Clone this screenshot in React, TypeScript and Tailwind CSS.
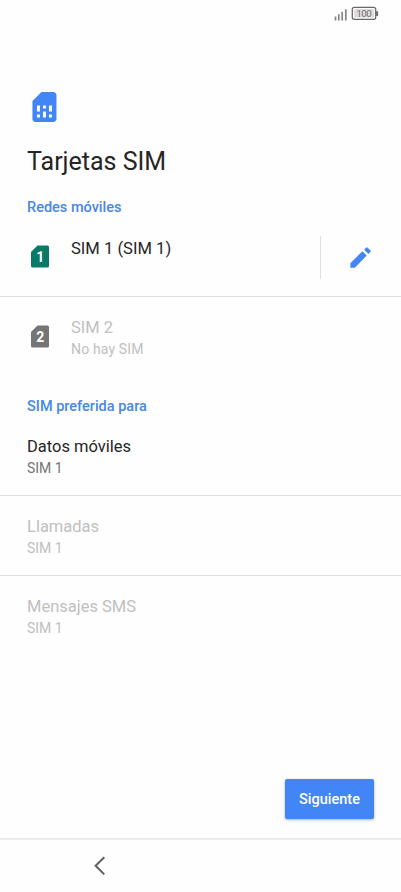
function StatusBar() {
  return (
    <header className="flex h-7 shrink-0 justify-end pr-[22px]">
      <svg width="45" height="28" viewBox="0 0 45 28">
        <path d="M1.5 20.5v-4M4.8 20.5v-6.3M8.2 20.5v-8.7M11.8 20.5V9.3" stroke="#858585" strokeWidth="1.7" />
        <rect x="18.3" y="7.3" width="23.4" height="12" rx="2" fill="#fff" stroke="#696969" strokeWidth="1.3" />
        <rect x="20" y="9" width="20" height="8.6" fill="#dedede" />
        <path d="M43.1 11.3v4.6" stroke="#696969" strokeWidth="2" />
        <text x="30.1" y="17" textAnchor="middle" fontSize="9.8" fill="#707070" textLength="15.5">100</text>
      </svg>
    </header>
  );
}

function SimCardIcon() {
  return (
    <svg className="mt-[61px] ml-[26px] size-9" viewBox="0 0 24 24" fill="#4285f4">
      <path d="M20.3 4c0-1.1-.9-2-2-2h-8L4.3 8v12c0 1.1.9 2 2 2h12c1.1 0 2-.9 2-2V4zM9.3 19h-2v-2h2v2zm8 0h-2v-2h2v2zm-8-4h-2v-4h2v4zm4 4h-2v-4h2v4zm0-6h-2v-2h2v2zm4 2h-2v-4h2v4z" />
    </svg>
  );
}

function EditIcon() {
  return (
    <svg className="mr-[1.5px] size-[27px]" viewBox="0 0 24 24" fill="#4285f4">
      <path d="M3 17.1V21h3.9L17.6 10.3 13.7 6.4 3 17.1zM20.71 7.04a1 1 0 0 0 0-1.41l-2.34-2.34a1 1 0 0 0-1.41 0l-1.75 1.75 3.75 3.75 1.75-1.75z" />
    </svg>
  );
}

function SimBadge({ slot, color }: { slot: string; color: string }) {
  return (
    <svg className="mt-[9px] ml-1 shrink-0" width="18" height="23" viewBox="0 0 18 23">
      <path d="M6.5.5H16.5A1.5 1.5 0 0 1 18 2v19a1.5 1.5 0 0 1-1.5 1.5h-15A1.5 1.5 0 0 1 0 21V7z" fill={color} />
      <text x="9.2" y="16.7" textAnchor="middle" fontSize="14" fontWeight="700" fill="#fff">{slot}</text>
    </svg>
  );
}

function Preference({ title, disabled }: { title: string; disabled?: boolean }) {
  return (
    <li className={`h-20 border-b border-[#dfdfdf] px-[27px] pt-5 last:border-b-0 ${disabled ? "text-[#c0c0c0]" : "text-[#252525]"}`}>
      <p className="text-[16.5px] leading-[22px]">{title}</p>
      <p className={`text-[14px] leading-5 ${disabled ? "" : "text-[#747474]"}`}>SIM 1</p>
    </li>
  );
}

export default function App() {
  return (
    <div className="flex h-[892px] w-[401px] flex-col overflow-hidden bg-[#fefefe] font-['Roboto',sans-serif] text-[#252525]">
      <StatusBar />

      <main className="flex flex-1 flex-col">
        <SimCardIcon />
        <h1 className="mt-[21px] ml-[27px] text-[25px] leading-8">Tarjetas SIM</h1>

        <h2 className="mt-[20px] ml-[27px] text-[14.5px] leading-5 font-medium text-[#4787e5]">Redes móviles</h2>

        <section>
          <div className="flex h-[79px] border-b border-[#dfdfdf] pl-[27px] pt-[18px]">
            <SimBadge slot="1" color="#087b68" />
            <p className="mt-px ml-[22px] flex-1 pt-px text-[16.6px] leading-[22px]">SIM 1 (SIM 1)</p>
            <button aria-label="Editar" className="flex h-[43px] w-[81px] items-center justify-center border-l border-[#dfdfdf]">
              <EditIcon />
            </button>
          </div>
          <div className="flex h-[99px] pl-[27px] pt-[19px] text-[#c0c0c0]">
            <SimBadge slot="2" color="#757575" />
            <div className="mt-px ml-[22px]">
              <p className="text-[16.5px] leading-[22px]">SIM 2</p>
              <p className="text-[14px] leading-5 tracking-[0.15px]">No hay SIM</p>
            </div>
          </div>
        </section>

        <h2 className="mt-px ml-[27px] text-[14.5px] leading-5 font-medium text-[#4787e5]">SIM preferida para</h2>
        <ul className="-mt-px">
          <Preference title="Datos móviles" />
          <Preference title="Llamadas" disabled />
          <Preference title="Mensajes SMS" disabled />
        </ul>

        <button className="mt-auto mr-[27px] mb-[19.5px] h-10 w-[89px] self-end rounded-xs bg-[#4285f4] pt-0.5 text-[14.5px] font-medium text-white shadow-[0_1px_3px_rgba(0,0,0,0.3)]">
          Siguiente
        </button>
      </main>

      <nav className="h-[54px] shrink-0 border-t-2 border-[#ebebeb] pt-[15.5px] pl-[93px]">
        <svg width="14" height="20" viewBox="0 0 14 20" fill="none" stroke="#606060" strokeWidth="2">
          <path d="M11.3 1.2 2.6 9.8l8.7 8.6" />
        </svg>
      </nav>
    </div>
  );
}
